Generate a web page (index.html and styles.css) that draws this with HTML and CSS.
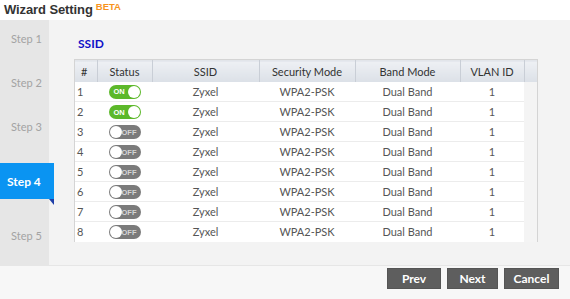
FILE: index.html
```html
<!DOCTYPE html>
<html>
<head>
<meta charset="utf-8">
<link rel="stylesheet" href="styles.css">
</head>
<body>
<div class="page">
  <header class="topbar">
    <span class="title">Wizard Setting</span><span class="beta">BETA</span>
  </header>
  <div class="main">
    <nav class="steps">
      <div class="step s1">Step 1</div>
      <div class="step s2">Step 2</div>
      <div class="step s3">Step 3</div>
      <div class="step s4 active">Step 4<span class="fold"></span></div>
      <div class="step s5">Step 5</div>
    </nav>
    <section class="content">
      <h2 class="section-title">SSID</h2>
      <div class="table-box">
        <table class="grid">
          <colgroup>
            <col class="c-num"><col class="c-status"><col class="c-ssid"><col class="c-sec"><col class="c-band"><col class="c-vlan"><col class="c-fill">
          </colgroup>
          <thead>
            <tr>
              <th class="num">#</th><th>Status</th><th>SSID</th><th>Security Mode</th><th>Band Mode</th><th>VLAN ID</th><th class="fill"></th>
            </tr>
          </thead>
          <tbody>
            <tr><td class="num">1</td><td><span class="tog on"><span class="lbl">ON</span><span class="knob"></span></span></td><td>Zyxel</td><td>WPA2-PSK</td><td>Dual Band</td><td>1</td><td class="fill"></td></tr>
            <tr><td class="num">2</td><td><span class="tog on"><span class="lbl">ON</span><span class="knob"></span></span></td><td>Zyxel</td><td>WPA2-PSK</td><td>Dual Band</td><td>1</td><td class="fill"></td></tr>
            <tr><td class="num">3</td><td><span class="tog off"><span class="knob"></span><span class="lbl">OFF</span></span></td><td>Zyxel</td><td>WPA2-PSK</td><td>Dual Band</td><td>1</td><td class="fill"></td></tr>
            <tr><td class="num">4</td><td><span class="tog off"><span class="knob"></span><span class="lbl">OFF</span></span></td><td>Zyxel</td><td>WPA2-PSK</td><td>Dual Band</td><td>1</td><td class="fill"></td></tr>
            <tr><td class="num">5</td><td><span class="tog off"><span class="knob"></span><span class="lbl">OFF</span></span></td><td>Zyxel</td><td>WPA2-PSK</td><td>Dual Band</td><td>1</td><td class="fill"></td></tr>
            <tr><td class="num">6</td><td><span class="tog off"><span class="knob"></span><span class="lbl">OFF</span></span></td><td>Zyxel</td><td>WPA2-PSK</td><td>Dual Band</td><td>1</td><td class="fill"></td></tr>
            <tr><td class="num">7</td><td><span class="tog off"><span class="knob"></span><span class="lbl">OFF</span></span></td><td>Zyxel</td><td>WPA2-PSK</td><td>Dual Band</td><td>1</td><td class="fill"></td></tr>
            <tr><td class="num">8</td><td><span class="tog off"><span class="knob"></span><span class="lbl">OFF</span></span></td><td>Zyxel</td><td>WPA2-PSK</td><td>Dual Band</td><td>1</td><td class="fill"></td></tr>
          </tbody>
        </table>
      </div>
    </section>
  </div>
  <footer class="footer">
    <button class="btn">Prev</button>
    <button class="btn">Next</button>
    <button class="btn">Cancel</button>
  </footer>
</div>
</body>
</html>
```

FILE: styles.css
```css
* { box-sizing: border-box; }
html, body { margin: 0; padding: 0; }
body {
  width: 570px;
  height: 299px;
  overflow: hidden;
  font-family: "Lato", "Open Sans", sans-serif;
  background: #f6f6f6;
  color: #555;
}
.page { display: flex; flex-direction: column; height: 299px; }

.topbar {
  height: 20px;
  background: #ffffff;
  padding-left: 4px;
  display: flex;
  align-items: flex-start;
}
.title {
  font-family: "Liberation Sans", Arial, sans-serif;
  font-weight: bold;
  font-size: 13px;
  color: #333;
  line-height: 20px;
  letter-spacing: -0.1px;
}
.beta {
  font-family: "Liberation Sans", Arial, sans-serif;
  font-weight: bold;
  font-size: 9.5px;
  color: #f7941d;
  margin-left: 3px;
  line-height: 13px;
}

.main { display: flex; height: 245px; background: #f3f3f3; }
.steps {
  width: 49px;
  flex: none;
  background: #e6e6e6;
  display: flex;
  flex-direction: column;
  position: relative;
  z-index: 1;
}
.step {
  height: 36px;
  display: flex;
  align-items: center;
  padding-left: 11px;
  font-size: 11px;
  color: #a3a3a3;
}
.s2, .s3 { margin-top: 8px; }
.s4 { margin-top: 19px; }
.s5 { margin-top: 18px; }
.step.active {
  width: 54px;
  background: #0a94f2;
  color: #fff;
  font-weight: bold;
  padding-left: 7px;
  font-size: 12px;
  position: relative;
}
.fold {
  position: absolute;
  right: 0;
  bottom: -6px;
  width: 0;
  height: 0;
  border-top: 6px solid #1f3fa8;
  border-left: 5px solid transparent;
}

.content { flex: 1; padding: 14px 0 0 25px; }
.section-title {
  margin: 0 0 5px 4px;
  font-size: 12px;
  font-weight: bold;
  color: #1010c8;
  line-height: 16px;
  height: 20px;
  display: flex;
  align-items: center;
}
.table-box {
  width: 464px;
  height: 183px;
  border: 1px solid #d4d4d4;
  background: #f4f4f4;
}
.grid {
  border-collapse: collapse;
  table-layout: fixed;
  width: 462px;
  font-size: 11px;
}
.c-num { width: 22px; }
.c-status { width: 55px; }
.c-ssid { width: 107px; }
.c-sec { width: 96px; }
.c-band { width: 105px; }
.c-vlan { width: 64px; }
.c-fill { width: 13px; }
.grid th {
  height: 21px;
  font-weight: normal;
  color: #333;
  background: linear-gradient(#eef0f4, #dbe0e7);
  border-right: 1px solid #c9ced6;
  border-top: 1px solid #e2e5ea;
  text-align: center;
  padding: 0;
}
.grid th.num { text-align: left; padding-left: 6px; }
.grid th.fill { border-right: none; }
.grid td {
  height: 20px;
  background: #ffffff;
  border-bottom: 1px solid #ececec;
  text-align: center;
  padding: 0;
  color: #555;
}
.grid td.num { text-align: left; padding-left: 2px; }
.grid td.fill { background: #f4f4f4; border-bottom: none; }
.grid tbody tr:last-child td { border-bottom: none; }

.tog {
  display: inline-flex;
  align-items: center;
  vertical-align: middle;
  width: 32px;
  height: 14px;
  border-radius: 7px;
  padding: 0 1px;
  justify-content: space-between;
}
.tog.on { background: #5cb82a; padding-left: 5px; }
.tog.off { background: #7b7b7b; padding-right: 4px; }
.knob {
  width: 12px;
  height: 12px;
  border-radius: 50%;
  background: #fff;
}
.lbl {
  font-family: "Liberation Sans", Arial, sans-serif;
  font-size: 7.5px;
  font-weight: bold;
  color: #fff;
}
.tog.off .lbl { color: #d5d5d5; }

.footer {
  flex: 1;
  border-top: 1px solid #e6e6e6;
  background: #f7f7f7;
  display: flex;
  justify-content: flex-end;
  align-items: flex-start;
  padding: 2px 11px 0 0;
  gap: 6px;
}
.btn {
  height: 21px;
  border: 1px solid #555;
  background: #5e5e5e;
  color: #fff;
  font-family: "Lato", sans-serif;
  font-weight: bold;
  font-size: 12px;
  padding: 0;
  margin: 0;
}
.btn:nth-child(1) { width: 54px; }
.btn:nth-child(2) { width: 51px; }
.btn:nth-child(3) { width: 55px; }
```
